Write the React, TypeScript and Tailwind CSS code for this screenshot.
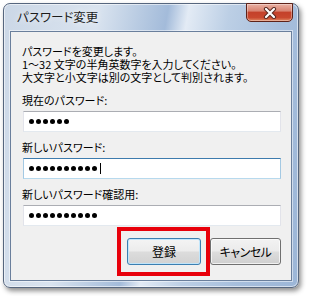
const jp = "font-['Noto_Sans_CJK_JP','Noto_Sans',sans-serif] [font-feature-settings:'palt']";

const Dots = ({ count, caret }: { count: number; caret?: boolean }) => (
  <div className="flex items-center gap-[2px] pl-[5px]">
    {Array.from({ length: count }).map((_, i) => (
      <span key={i} className="w-[5px] h-[5px] rounded-full bg-black" />
    ))}
    {caret && <span className="ml-[1px] w-px h-[11px] bg-black" />}
  </div>
);

const PasswordBox = ({ count, focused }: { count: number; focused?: boolean }) => (
  <div
    className={`ml-[1px] h-[21px] flex items-center bg-white border ${
      focused
        ? "border-[#a4c9e3] border-t-[#3d7bad] border-b-[#b7d9ed]"
        : "border-[#e2e3ea] border-t-[#abadb3] border-b-[#e3e9ef]"
    }`}
  >
    <Dots count={count} caret={focused} />
  </div>
);

export default function App() {
  return (
    <div className={`w-[309px] h-[296px] bg-white pt-[3px] pl-[3px] ${jp}`}>
      <div className="relative w-[296px] h-[285px] flex flex-col px-[6px] pb-[6px] rounded-[7px] border border-[#56667e] bg-[linear-gradient(100deg,#cbd7e6_0%,#d9e3ef_28%,#b3c7e0_42%,#a3bbda_48%,#e3ebf5_54%,#bccfe5_66%,#a6bedc_82%,#9cb6d7_100%)] shadow-[inset_0_0_0_1px_rgba(255,255,255,0.55),2px_3px_5px_rgba(0,0,0,0.45)]">
        {/* title bar */}
        <div className="h-[27px] flex items-center pl-[7px] text-[12.5px] text-[#1c1c1c] [text-shadow:0_0_6px_rgba(255,255,255,0.9)]">
          パスワード変更
        </div>
        <div className="absolute right-[5px] top-[-1px] w-[47px] h-[19px] rounded-b-[5px] border border-[#5e2218] bg-[linear-gradient(#eab1a3,#d98472_40%,#c4412a_50%,#c9482e_80%,#e08a64)] shadow-[inset_0_0_0_1px_rgba(255,255,255,0.35)] flex items-center justify-center">
          <svg width="16" height="12" viewBox="0 0 16 12">
            <path d="M4 2 L12 10 M12 2 L4 10" stroke="#5a2a22" strokeWidth="4.2" strokeLinecap="round" />
            <path d="M4 2 L12 10 M12 2 L4 10" stroke="#ffffff" strokeWidth="2.2" strokeLinecap="round" />
          </svg>
        </div>

        {/* content panel */}
        <div className="flex-1 flex flex-col bg-[#f0f0f0] border border-[#6a7f9c] shadow-[0_0_0_1px_rgba(255,255,255,0.5)] pt-[13px] pl-[11px] pr-[10px] text-[11px] leading-[13px] text-black">
          <p>パスワードを変更します。</p>
          <p>1～32 文字の半角英数字を入力してください。</p>
          <p>大文字と小文字は別の文字として判別されます。</p>

          <p className="mt-[10px] mb-[4px]">現在のパスワード:</p>
          <PasswordBox count={6} />

          <p className="mt-[9px] mb-[4px]">新しいパスワード:</p>
          <PasswordBox count={10} focused />

          <p className="mt-[9px] mb-[4px]">新しいパスワード確認用:</p>
          <PasswordBox count={10} />

          <div className="mt-[12px] flex justify-end gap-[9px]">
            <div className="relative">
              <button className="w-[74px] h-[27px] rounded-[3px] border border-[#3c7fb1] bg-[linear-gradient(#f4f4f4,#ececec_48%,#dcdcdc_52%,#d2d2d2)] shadow-[inset_0_0_0_1px_rgba(190,230,253,0.9)] text-[12px]">
                登録
              </button>
              <div className="absolute left-[-10px] right-[-9px] top-[-11px] bottom-[-11px] border-[4px] border-[#e8000b]" />
            </div>
            <button className="w-[71px] h-[27px] rounded-[3px] border border-[#707070] bg-[linear-gradient(#f2f2f2,#ebebeb_48%,#dddddd_52%,#cfcfcf)] shadow-[inset_0_0_0_1px_rgba(255,255,255,0.7)] text-[12px] tracking-[-0.5px]">
              キャンセル
            </button>
          </div>
        </div>
      </div>
    </div>
  );
}
